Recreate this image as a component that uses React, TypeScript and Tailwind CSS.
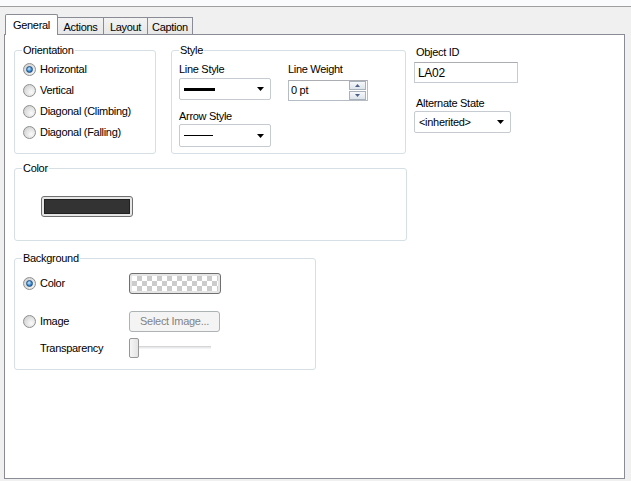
import type { ReactNode } from "react";

function Radio({ checked = false }: { checked?: boolean }) {
  return (
    <span className="w-[13px] h-[13px] shrink-0 rounded-full border border-[#8e8f8f] bg-[radial-gradient(circle_at_65%_65%,#fbfbfb,#d4d4d4_75%)] flex items-center justify-center">
      {checked && (
        <span className="w-[7px] h-[7px] rounded-full bg-[radial-gradient(circle_at_40%_35%,#cdeaff,#3b8fd6_55%,#164d86)] border border-[#1d4f80]" />
      )}
    </span>
  );
}

function Arrow() {
  return (
    <svg width="7" height="4" viewBox="0 0 7 4" className="shrink-0">
      <polygon points="0,0 7,0 3.5,4" fill="#000" />
    </svg>
  );
}

function Combo({ className, children }: { className: string; children: ReactNode }) {
  return (
    <div className={`flex items-center justify-between bg-white border border-[#c6cbd1] rounded-[2px] pl-[4px] pr-[6px] ${className}`}>
      <div className="flex items-center">{children}</div>
      <Arrow />
    </div>
  );
}

function Group({ title, className, children }: { title: string; className: string; children: ReactNode }) {
  return (
    <fieldset className={`border border-[#d5dfe5] rounded-[3px] shrink-0 ${className}`}>
      <legend className="ml-[7px] px-[1px] leading-[14px]">{title}</legend>
      {children}
    </fieldset>
  );
}

function Swatch({ className }: { className: string }) {
  return (
    <div className="w-[92px] h-[21px] border border-[#6f6f6f] rounded-[3px] bg-[#e6e6e6] p-[2px]">
      <div className={`w-full h-full ${className}`} />
    </div>
  );
}

export default function App() {
  const orientations = ["Horizontal", "Vertical", "Diagonal (Climbing)", "Diagonal (Falling)"];

  return (
    <div className="w-[631px] h-[481px] bg-[#f0f0f0] overflow-hidden font-['Liberation_Sans',Arial,sans-serif] text-[11px] tracking-[-0.3px] text-black">
      <div className="h-[6px] bg-[#fafbfd]" />
      <div className="h-px bg-[#a0a0a0]" />

      {/* Tabs */}
      <div className="h-[27px] flex items-end pl-[5px]">
        <div className="relative z-10 w-[53px] h-[21px] -mb-px pt-[2px] text-center bg-white border-t border-l border-r border-[#898c95] rounded-t-[2px]">
          General
        </div>
        <div className="w-[46px] h-[17px] pt-px text-center bg-[linear-gradient(#f3f3f3,#e7e7e7)] border-t border-r border-[#898c95]">Actions</div>
        <div className="w-[44px] h-[17px] pt-px text-center bg-[linear-gradient(#f3f3f3,#e7e7e7)] border-t border-r border-[#898c95]">Layout</div>
        <div className="w-[45px] h-[17px] pt-px text-center bg-[linear-gradient(#f3f3f3,#e7e7e7)] border-t border-r border-[#898c95]">Caption</div>
      </div>

      {/* Panel */}
      <div className="ml-[4px] w-[621px] h-[445px] bg-white border border-[#898c95] pt-[8px] pl-[9px]">
        <div className="flex">
          <Group title="Orientation" className="w-[142px] h-[111px]">
            <div className="pt-[2px] pl-[8px]">
              {orientations.map((o, i) => (
                <div key={o} className="h-[21px] flex items-center gap-[4px]">
                  <Radio checked={i === 0} />
                  <span>{o}</span>
                </div>
              ))}
            </div>
          </Group>

          <Group title="Style" className="ml-[15px] w-[235px] h-[111px]">
            <div className="flex pl-[7px] pt-[5px] gap-[17px]">
              <div className="w-[92px]">
                <div className="leading-[14px]">Line Style</div>
                <Combo className="mt-[2px] h-[22px]">
                  <div className="w-[31px] h-[3px] bg-black" />
                </Combo>
                <div className="mt-[9px] leading-[14px]">Arrow Style</div>
                <Combo className="mt-px h-[23px]">
                  <div className="w-[29px] h-px bg-black" />
                </Combo>
              </div>
              <div>
                <div className="leading-[14px]">Line Weight</div>
                <div className="mt-[4px] w-[80px] h-[21px] flex items-center border border-[#b5bcc4] border-t-[#abadb3] bg-white pl-[2px] pr-px">
                  <span className="flex-1">0 pt</span>
                  <div className="flex flex-col gap-px">
                    <div className="w-[17px] h-[9px] border border-[#a9b1bb] bg-[linear-gradient(#f6f8fa,#dde4ec)] flex items-center justify-center">
                      <svg width="5" height="3" viewBox="0 0 5 3"><polygon points="0,3 5,3 2.5,0" fill="#4d6185" /></svg>
                    </div>
                    <div className="w-[17px] h-[9px] border border-[#a9b1bb] bg-[linear-gradient(#f6f8fa,#dde4ec)] flex items-center justify-center">
                      <svg width="5" height="3" viewBox="0 0 5 3"><polygon points="0,0 5,0 2.5,3" fill="#4d6185" /></svg>
                    </div>
                  </div>
                </div>
              </div>
            </div>
          </Group>

          <div className="ml-[8px] pt-[2px]">
            <div className="leading-[14px] pl-[2px]">Object ID</div>
            <div className="mt-[3px] w-[104px] h-[21px] flex items-center border border-[#c6cbd1] border-t-[#abadb3] bg-white pl-[3px] text-[12px]">
              LA02
            </div>
            <div className="mt-[13px] leading-[14px] pl-[2px]">Alternate State</div>
            <Combo className="mt-px w-[97px] h-[22px]">
              <span>&lt;inherited&gt;</span>
            </Combo>
          </div>
        </div>

        <Group title="Color" className="mt-[7px] w-[393px] h-[80px]">
          <div className="pl-[26px] pt-[21px]">
            <Swatch className="bg-[#333333] border border-[#202020]" />
          </div>
        </Group>

        <Group title="Background" className="mt-[10px] w-[302px] h-[119px]">
          <div className="pl-[8px] pt-[8px] grid grid-cols-[106px_auto]">
            <div className="h-[21px] flex items-center gap-[4px]">
              <Radio checked />
              <span>Color</span>
            </div>
            <Swatch className="bg-[conic-gradient(#cccccc_25%,#ffffff_0_50%,#cccccc_0_75%,#ffffff_0)] bg-[length:10px_10px]" />

            <div className="mt-[17px] h-[21px] flex items-center gap-[4px]">
              <Radio />
              <span>Image</span>
            </div>
            <div className="mt-[17px] w-[91px] h-[21px] flex items-center justify-center border border-[#adb2b5] rounded-[3px] bg-[#f4f4f4] text-[#838383]">
              Select Image...
            </div>

            <div className="mt-[6px] h-[20px] flex items-center pl-[17px]">Transparency</div>
            <div className="mt-[6px] relative w-[82px] h-[20px]">
              <div className="absolute left-0 right-0 top-[8px] h-[3px] border-t border-[#d6d6d6] border-b border-b-[#f4f4f4] bg-[#e7eaea]" />
              <div className="absolute left-0 top-0 w-[10px] h-[20px] border border-[#979797] rounded-[2px] bg-[linear-gradient(90deg,#f6f6f6,#e4e4e4)]" />
            </div>
          </div>
        </Group>
      </div>
    </div>
  );
}
